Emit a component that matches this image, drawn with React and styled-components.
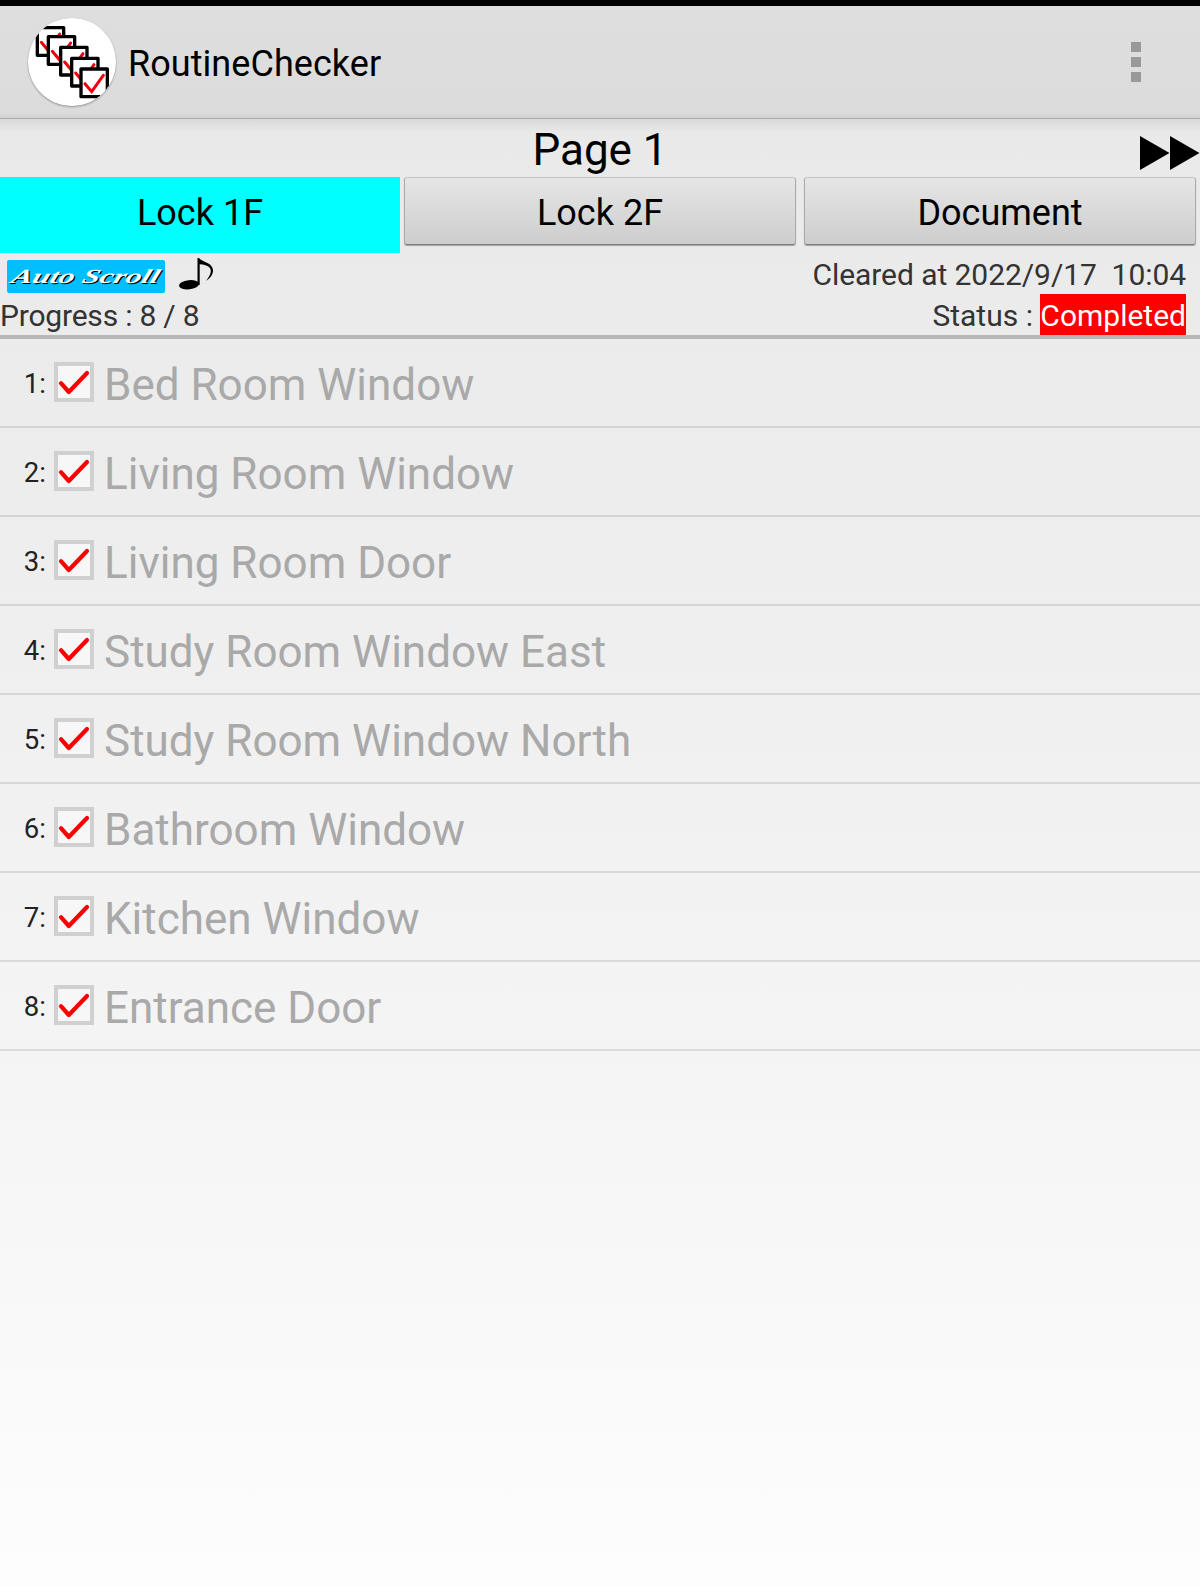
import React from 'react'
import styled, { createGlobalStyle } from 'styled-components';

const tabs = ['Lock 1F', 'Lock 2F', 'Document']

const tasks = [
    'Bed Room Window',
    'Living Room Window',
    'Living Room Door',
    'Study Room Window East',
    'Study Room Window North',
    'Bathroom Window',
    'Kitchen Window',
    'Entrance Door',
]

// top left corner of every sheet in the logo
const sheets = [[47, 48], [80, 75], [117, 107], [150, 140], [178, 172]]

const Logo = () => (
    <LogoSvg viewBox="24 24 264 264">
        <clipPath id="disc"><circle cx="156" cy="156" r="132" /></clipPath>
        <g clipPath="url(#disc)">
            <rect x="24" y="24" width="264" height="264" fill="#fff" />
            {sheets.map(([x, y]) => (
                <g key={x} transform={`translate(${x} ${y})`}>
                    <rect x="5" y="5" width="79" height="83" fill="#fff" stroke="#000" strokeWidth="10" strokeLinejoin="round" />
                    <path d="M17 49 L37 73 L72 24" fill="none" stroke="#f0000c" strokeWidth="9" strokeLinecap="round" />
                </g>
            ))}
        </g>
    </LogoSvg>
)

const App = () => {
    return (
        <Screen>
            <GlobalStyle />
            <StatusBar />
            <Header>
                <Logo />
                <h1>RoutineChecker</h1>
                <Menu>
                    <i />
                    <i />
                    <i />
                </Menu>
            </Header>

            <PageRow>
                <span />
                <h2>Page 1</h2>
                <NextIcon viewBox="0 0 60 36">
                    <path d="M0 1 L29.5 18 L0 35 Z M30 1 L59.5 18 L30 35 Z" />
                </NextIcon>
            </PageRow>

            <Tabs>
                {tabs.map((tab, i) => (
                    <Tab key={tab} $active={i === 0}>{tab}</Tab>
                ))}
            </Tabs>

            <Info>
                <InfoRow>
                    <AutoScroll><span>Auto Scroll</span></AutoScroll>
                    <NoteIcon viewBox="0 0 35 32">
                        <ellipse cx="10" cy="26.7" rx="10" ry="4.6" transform="rotate(-6 10 26.7)" />
                        <path d="M18.5 0 H20 C22 3 27 3.5 31 6.5 C36 11 35 18 27 23 C31 18 33.5 13 30.5 9.5 C28.5 7.5 25 6.5 20.7 6.3 V27 H18.5 Z" />
                    </NoteIcon>
                    <InfoText $right>Cleared at 2022/9/17{'\u00a0 '}10:04</InfoText>
                </InfoRow>
                <InfoRow>
                    <InfoText $spacing="-0.2px">Progress : 8 / 8</InfoText>
                    <InfoText $right $spacing="0">Status : <Badge>Completed</Badge></InfoText>
                </InfoRow>
            </Info>

            <List>
                {tasks.map((task, i) => (
                    <Item key={task}>
                        <Index>{i + 1}:</Index>
                        <CheckBox>
                            <svg viewBox="0 0 32 32">
                                <path d="M3 17.2 L10.8 26 L29 7" />
                            </svg>
                        </CheckBox>
                        <Label>{task}</Label>
                    </Item>
                ))}
            </List>
        </Screen>
    )
}

export default App

const GlobalStyle = createGlobalStyle`
    body {
        margin: 0;
    }

    * {
        box-sizing: border-box;
    }
`

const Screen = styled.div`
    width: 1200px;
    height: 1586px;
    overflow: hidden;
    font-family: Roboto, "Liberation Sans", sans-serif;
    background: linear-gradient(#e8e8e8, #ebebeb 20%, #f4f4f4 65%, #fdfdfd);

    h1, h2 {
        margin: 0;
        font-weight: 400;
        color: #000;
    }
`

const StatusBar = styled.div`
    height: 6px;
    background: #000;
`

const Header = styled.header`
    display: flex;
    align-items: center;
    height: 113px;
    padding: 0 59px 0 28px;
    background: linear-gradient(#dedede, #dcdcdc 95%, #d2d2d2);
    border-bottom: 1px solid #adadad;

    h1 {
        flex: 1;
        margin-left: 12px;
        padding-top: 3px;
        font-size: 36px;
        letter-spacing: 0.05px;
    }
`

const LogoSvg = styled.svg`
    width: 88px;
    height: 88px;
    border-radius: 50%;
    box-shadow: 0 1px 2px rgba(0, 0, 0, 0.35);
`

const Menu = styled.div`
    display: flex;
    flex-direction: column;
    gap: 5px;

    i {
        width: 10px;
        height: 10px;
        background: #999;
    }
`

const PageRow = styled.div`
    display: grid;
    grid-template-columns: 1fr auto 1fr;
    align-items: center;
    height: 58px;
    padding-top: 3px;
    background: linear-gradient(rgba(0, 0, 0, 0.07), transparent 14px);

    h2 {
        font-size: 44px;
        line-height: 52px;
    }
`

const NextIcon = styled.svg`
    width: 60px;
    height: 36px;
    margin-top: 6px;
    justify-self: end;
`

const Tabs = styled.div`
    display: grid;
    grid-template-columns: repeat(3, 1fr);
    height: 76px;
`

const Tab = styled.button`
    margin: ${({ $active }) => ($active ? '0' : '0 4px 8px 4px')};
    padding: ${({ $active }) => ($active ? '0 0 5px' : '3px 0 0')};
    border: ${({ $active }) => ($active ? 'none' : '1px solid #aaa')};
    border-top-color: #c4c4c4;
    border-bottom-color: #7c7c7c;
    border-radius: ${({ $active }) => ($active ? '0' : '3px')};
    background: ${({ $active }) => ($active ? '#00ffff' : 'linear-gradient(#e6e6e6, #cdcdcd)')};
    box-shadow: ${({ $active }) => ($active ? 'none' : '0 1px 1px rgba(0, 0, 0, 0.3)')};
    font-family: inherit;
    font-size: 36px;
    color: #000;
`

const Info = styled.div`
    border-bottom: 4px solid #b8b8b8;
`

const InfoRow = styled.div`
    display: flex;
    align-items: center;
    height: 41px;
    padding-right: 14px;
`

const InfoText = styled.div`
    height: 41px;
    margin-left: ${({ $right }) => ($right ? 'auto' : '0')};
    font-size: 30px;
    line-height: 43px;
    letter-spacing: ${({ $spacing }) => $spacing || '-0.06px'};
    color: #333;
`

const Badge = styled.span`
    display: inline-block;
    height: 41px;
    background: #ff0000;
    color: #fff;
`

const AutoScroll = styled.div`
    display: flex;
    align-items: center;
    justify-content: center;
    width: 158px;
    height: 33px;
    margin: 6px 14px 0 7px;
    border-radius: 2px;
    background: #00bfff;

    span {
        font: italic bold 20px "Liberation Serif", serif;
        color: #fff;
        white-space: nowrap;
        text-shadow: 1px 1px 0 #000;
        transform: scaleX(1.57) skewX(-12deg);
    }
`

const NoteIcon = styled.svg`
    width: 35px;
    height: 32px;
`

const List = styled.ul`
    margin: 0;
    padding: 0;
    list-style: none;
`

const Item = styled.li`
    display: flex;
    align-items: center;
    height: 89px;
    border-bottom: 2px solid rgba(0, 0, 0, 0.1);
`

const Index = styled.span`
    width: 46px;
    padding-top: 2px;
    font-size: 27.5px;
    text-align: right;
    color: #222;
`

const CheckBox = styled.span`
    width: 40px;
    height: 40px;
    margin: 0 10px 1px 8px;
    border: 4px solid #d0d0d0;
    background: #f7f7f7;

    svg {
        display: block;
    }

    path {
        fill: none;
        stroke: #fa0000;
        stroke-width: 4.2;
        stroke-linecap: round;
        stroke-linejoin: round;
    }
`

const Label = styled.span`
    padding-top: 5px;
    font-size: 44px;
    color: #a9a9a9;
`
